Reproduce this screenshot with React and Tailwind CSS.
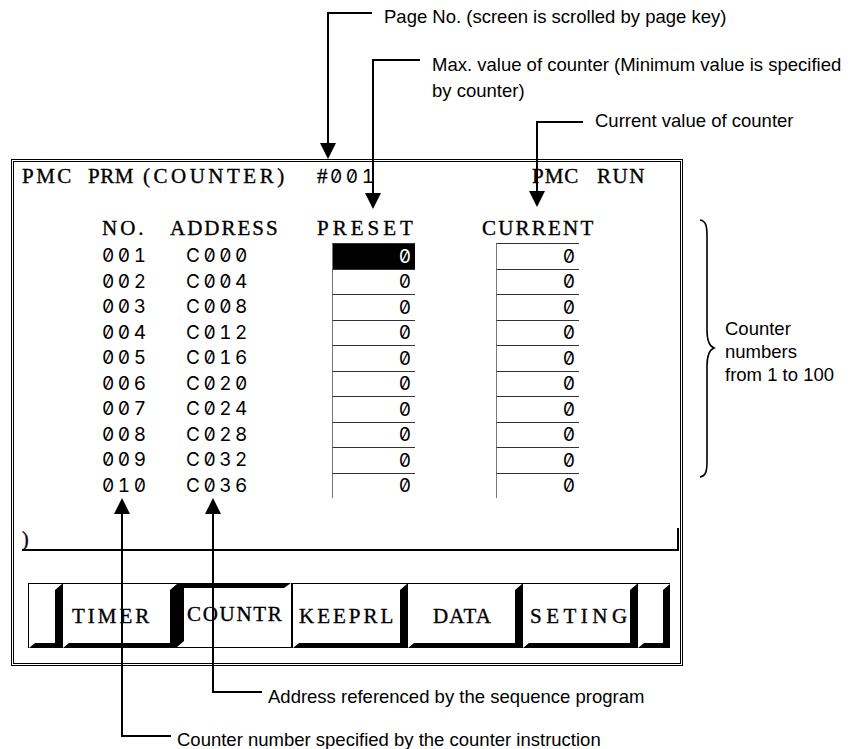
import React from 'react'

const serif = "font-['Liberation_Serif','Times_New_Roman',serif] [-webkit-text-stroke:0.35px_black]"
const crt = "font-['Inter','Liberation_Sans',sans-serif] slashed-zero tabular-nums"
const note = "font-['Liberation_Sans',Arial,sans-serif] text-[18.5px] leading-[20px] whitespace-nowrap"

const rows = [
  ['001', 'C000'], ['002', 'C004'], ['003', 'C008'], ['004', 'C012'], ['005', 'C016'],
  ['006', 'C020'], ['007', 'C024'], ['008', 'C028'], ['009', 'C032'], ['010', 'C036'],
]

const keys = [
  { label: '', w: 'w-[34px]' },
  { label: 'TIMER', w: 'w-[115px]', text: 'pl-[3px] tracking-[3px]' },
  { label: 'COUNTR', w: 'w-[115px]', text: 'pl-[3px] tracking-[1.7px]', on: true },
  { label: 'KEEPRL', w: 'w-[115px]', text: 'pl-0 tracking-[3px]' },
  { label: 'DATA', w: 'w-[115px]', text: 'pl-[19px] tracking-[1.2px]' },
  { label: 'SETING', w: 'w-[115px]', text: 'pl-[1px] tracking-[4.5px]' },
  { label: '', w: 'w-[33px]' },
]

function SoftKey({ label, w, text, on }) {
  // pressed key gets its shadow on top/left, the others on right/bottom
  const outer = on ? 'border-r border-b' : 'border-t border-l'
  const inner = on
    ? 'border-t-[5px] border-l-[7px] border-r-[7px] border-b-[6px] border-t-black border-l-black border-r-white border-b-white'
    : 'border-t-[6px] border-l-[6px] border-r-[7px] border-b-[5px] border-t-white border-l-white border-r-black border-b-black'
  return (
    <div className={`${w} h-full ${outer} border-black`}>
      <div className={`h-full flex items-center ${inner}`}>
        <span className={`${serif} text-[21px] leading-none whitespace-nowrap ${text || ''}`}>{label}</span>
      </div>
    </div>
  )
}

function Cell({ hi }) {
  return (
    <div
      className={`w-[83px] h-full border-t border-l border-t-[#333] border-l-[#777] flex items-center justify-end pr-[4px] ${crt} text-[19px] leading-none ${hi ? 'bg-black text-white' : ''}`}
    >
      0
    </div>
  )
}

export default function App() {
  return (
    <div className="relative w-[850px] h-[749px] bg-white text-black overflow-hidden pt-[159px] pl-[11px]">
      {/* CRT screen */}
      <div className="w-[672px] h-[507px] border-[3px] border-double border-black flex flex-col">
        <div className={`${serif} text-[21px] leading-[21px] mt-[4px] flex whitespace-pre tracking-[2.5px]`}>
          <span className="ml-[8px] w-[66px]">PMC</span>
          <span className="w-[55px] tracking-[0.5px]">PRM</span>
          <span className="w-[174px] tracking-[3.5px]">(COUNTER)</span>
          <span className="w-[215px]">#<span className={`${crt} text-[19px] tracking-[3.5px] [-webkit-text-stroke:0px]`}>001</span></span>
          <span className="w-[65px] tracking-[1px]">PMC</span>
          <span className="tracking-[1.5px]">RUN</span>
        </div>

        <div className={`${serif} text-[21px] leading-[21px] mt-[31px] ml-[88px] flex whitespace-pre`}>
          <span className="w-[68px] tracking-[3px]">NO.</span>
          <span className="w-[147px] tracking-[2px]">ADDRESS</span>
          <span className="w-[165px] tracking-[4px]">PRESET</span>
          <span className="tracking-[2.2px]">CURRENT</span>
        </div>

        <div className="mt-[4px] flex flex-col">
          {rows.map(([no, addr], i) => (
            <div key={no} className="h-[25.5px] flex ml-[88px]">
              <div className={`w-[84px] flex items-center ${crt} text-[19px] leading-none tracking-[3.5px]`}>{no}</div>
              <div className={`w-[146px] flex items-center ${crt} text-[19px] leading-none tracking-[3.5px]`}>{addr}</div>
              <Cell hi={i === 0} />
              <div className="w-[81px]" />
              <Cell />
            </div>
          ))}
        </div>

        <div className="mt-[30px] ml-[8px] w-[657px] h-[23px] border-b-2 border-r-2 border-black flex items-center">
          <span className={`${serif} text-[20px] leading-none`}>)</span>
        </div>

        <div className="mt-[32px] ml-[14px] h-[65px] flex">
          {keys.map((k, i) => (
            <SoftKey key={i} {...k} />
          ))}
        </div>
      </div>

      {/* callout lines and arrows */}
      <svg className="absolute left-0 top-0 pointer-events-none" width="850" height="749" viewBox="0 0 850 749">
        <g fill="none" stroke="#000" strokeWidth="2">
          <path d="M372 13 H328 V144" />
          <path d="M420 60 H373 V194" />
          <path d="M583 122 H537 V192" />
          <path d="M213 512 V692 H262" />
          <path d="M122 512 V736 H171" />
        </g>
        <g fill="#000">
          <polygon points="320,143 336,143 328,159" />
          <polygon points="365,193 381,193 373,209" />
          <polygon points="529,191 545,191 537,207" />
          <polygon points="205,514 221,514 213,498" />
          <polygon points="114,514 130,514 122,498" />
        </g>
        <path
          d="M700 220 C706 221 707 226 707 236 V330 C707 340 709 346 714 348 C709 350 707 356 707 366 V461 C707 471 706 476 700 477"
          fill="none"
          stroke="#000"
          strokeWidth="1.6"
        />
      </svg>

      <div className={`absolute left-[384px] top-[7px] ${note}`}>Page No. (screen is scrolled by page key)</div>
      <div className={`absolute left-[432px] top-[52px] ${note} leading-[26px]`}>
        Max. value of counter (Minimum value is specified
        <br />
        by counter)
      </div>
      <div className={`absolute left-[595px] top-[111px] ${note}`}>Current value of counter</div>
      <div className={`absolute left-[725px] top-[317px] ${note} leading-[23px]`}>
        Counter
        <br />
        numbers
        <br />
        from 1 to 100
      </div>
      <div className={`absolute left-[268px] top-[687px] ${note}`}>Address referenced by the sequence program</div>
      <div className={`absolute left-[177px] top-[730px] ${note}`}>Counter number specified by the counter instruction</div>
    </div>
  )
}
